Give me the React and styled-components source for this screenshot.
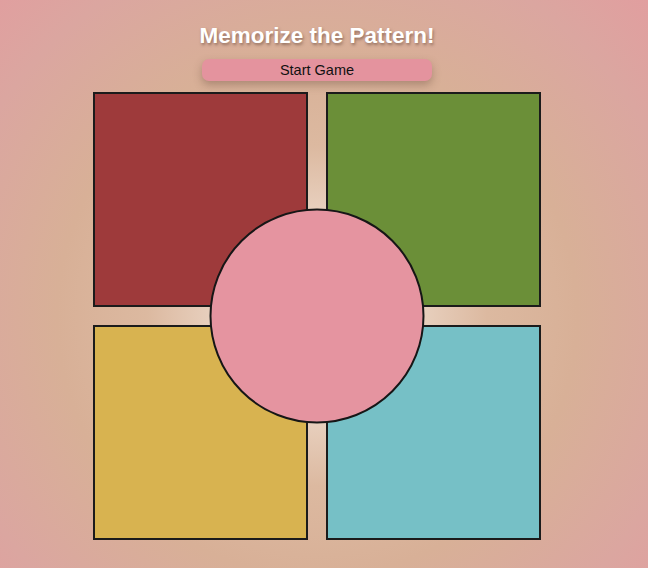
import React from 'react'
import styled, { createGlobalStyle } from 'styled-components'

const GlobalStyle = createGlobalStyle`
  html, body {
    margin: 0;
    padding: 0;
    height: 100%;
  }
  body {
    font-family: "Liberation Sans", Arial, sans-serif;
    background: radial-gradient(circle at 317px 316px, #f5ebe3 0px, #eedcce 70px, #dcb9a0 170px, #d8b097 260px, #dba6a0 380px, #e29d9f 470px);
    min-height: 568px;
  }
`;

const Page = styled.main`
  width: 634px;
  display: flex;
  flex-direction: column;
  align-items: center;
  padding-top: 22px;
`;

const Title = styled.h1`
  margin: 0;
  font-size: 22.5px;
  line-height: 28px;
  font-weight: 700;
  color: #ffffff;
  text-shadow: 1px 2px 3px rgba(80, 50, 40, 0.5);
`;

const StartButton = styled.button`
  margin-top: 9px;
  width: 230px;
  height: 22px;
  border: none;
  border-radius: 7px;
  background: #e4939e;
  color: #111;
  font-family: "Liberation Sans", Arial, sans-serif;
  font-size: 14.5px;
  padding: 0;
  box-shadow: 0 4px 8px rgba(90, 60, 50, 0.35);
  cursor: pointer;
`;

const Board = styled.div`
  position: relative;
  margin-top: 11px;
  display: grid;
  grid-template-columns: 215px 215px;
  grid-template-rows: 215px 215px;
  gap: 18px;
`;

const Pad = styled.div`
  box-sizing: border-box;
  border: 2px solid #1b1b1b;
  background: ${(props) => props.color};
`;

const Center = styled.div`
  position: absolute;
  left: 50%;
  top: 50%;
  width: 215px;
  height: 215px;
  box-sizing: border-box;
  transform: translate(-50%, -50%);
  border: 2px solid #161616;
  border-radius: 50%;
  background: #e594a0;
`;

const pads = ['#9e3a3b', '#6b8f38', '#d8b350', '#76c0c6'];

export default function App() {
  return (
    <>
      <GlobalStyle />
      <Page>
        <Title>Memorize the Pattern!</Title>
        <StartButton>Start Game</StartButton>
        <Board>
          {pads.map((c) => (
            <Pad key={c} color={c} />
          ))}
          <Center />
        </Board>
      </Page>
    </>
  );
}
